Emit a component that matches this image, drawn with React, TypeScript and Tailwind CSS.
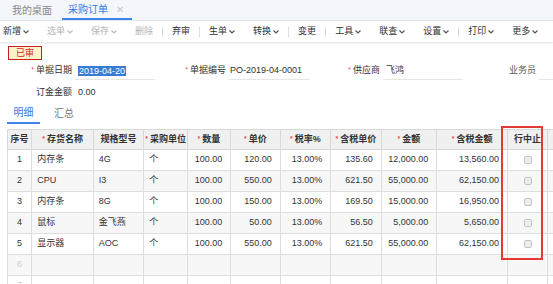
import React from 'react';

const Chevron = ({ gray }: { gray?: boolean }) => (
  <svg width="6" height="4" viewBox="0 0 6 4" className="ml-[2px]">
    <polyline points="0.5,0.5 3,3 5.5,0.5" fill="none" stroke={gray ? '#bbb' : '#555'} strokeWidth="1.2" />
  </svg>
);

type ToolItem = { label: string; menu?: boolean; disabled?: boolean } | 'sep';

const tools: ToolItem[] = [
  { label: '新增', menu: true },
  { label: '选单', menu: true, disabled: true },
  { label: '保存', menu: true, disabled: true },
  { label: '删除', disabled: true },
  'sep',
  { label: '弃审' },
  'sep',
  { label: '生单', menu: true },
  { label: '转换', menu: true },
  'sep',
  { label: '变更' },
  'sep',
  { label: '工具', menu: true },
  { label: '联查', menu: true },
  { label: '设置', menu: true },
  'sep',
  { label: '打印', menu: true },
  { label: '更多', menu: true },
];

const columns = [
  { title: '序号', w: 'w-[24px]', req: false },
  { title: '存货名称', w: 'w-[61px]', req: true },
  { title: '规格型号', w: 'w-[50px]', req: false },
  { title: '采购单位', w: 'w-[43px]', req: true },
  { title: '数量', w: 'w-[43px]', req: true },
  { title: '单价', w: 'w-[49px]', req: true },
  { title: '税率%', w: 'w-[50px]', req: true },
  { title: '含税单价', w: 'w-[50px]', req: true },
  { title: '金额', w: 'w-[55px]', req: true },
  { title: '含税金额', w: 'w-[70px]', req: true },
  { title: '行中止', w: 'w-[40px]', req: false },
  { title: '累', w: 'w-[60px]', req: false },
];

const rows = [
  ['内存条', '4G', '个', '100.00', '120.00', '13.00%', '135.60', '12,000.00', '13,560.00'],
  ['CPU', 'I3', '个', '100.00', '550.00', '13.00%', '621.50', '55,000.00', '62,150.00'],
  ['内存条', '8G', '个', '100.00', '150.00', '13.00%', '169.50', '15,000.00', '16,950.00'],
  ['鼠标', '金飞燕', '个', '100.00', '50.00', '13.00%', '56.50', '5,000.00', '5,650.00'],
  ['显示器', 'AOC', '个', '100.00', '550.00', '13.00%', '621.50', '55,000.00', '62,150.00'],
];

const Req = () => <span className="text-[#f04a4a] text-[7px] mr-[2px] relative -top-[1px]">*</span>;

const Checkbox = () => (
  <span className="inline-block w-[8px] h-[8px] rounded-[2px] border border-[#c4c4c4] bg-[#ededed] align-middle" />
);

export default function App() {
  return (
    <div
      className="relative w-[553px] h-[284px] overflow-hidden bg-white text-[#333] text-[9px]"
      style={{ fontFamily: '"Liberation Sans", "Noto Sans CJK SC", sans-serif' }}
    >
      {/* Page tabs */}
      <div className="h-[21px] bg-[#f3f6fb] flex items-stretch border-b border-[#e3e8ef]">
        <div className="pl-[12px] pr-[10px] flex items-center text-[10px] text-[#888]">我的桌面</div>
        <div className="px-[6px] flex items-center text-[10px] text-[#2f7be5] border-b-2 border-[#3b86e8] w-[70px]">
          采购订单
          <span className="ml-[8px] text-[#c5c9d0] text-[10px]">✕</span>
        </div>
      </div>

      {/* Toolbar */}
      <div className="h-[21px] flex items-center bg-white shadow-[0_1px_2px_rgba(0,0,0,0.12)] relative z-10">
        <div className="flex items-center -ml-[6px]">
          {tools.map((t, i) =>
            t === 'sep' ? (
              <span key={i} className="w-px h-[10px] bg-[#dcdcdc]" />
            ) : (
              <div
                key={i}
                className={`flex items-center px-[9px] leading-none ${t.disabled ? 'text-[#b5b5b5]' : 'text-[#333]'}`}
              >
                {t.label}
                {t.menu && <Chevron gray={t.disabled} />}
              </div>
            )
          )}
        </div>
      </div>

      {/* Status badge */}
      <div className="mt-[4px] ml-[8px] w-[34px] h-[14px] flex items-center justify-center border border-[#c8201e] bg-[#fff1c9] text-[#d3261f] leading-none">
        已审
      </div>

      {/* Form row 1 */}
      <div className="mt-[2px] h-[18px] flex items-stretch">
        <div className="w-[73px] shrink-0 flex items-center justify-end pr-[1px]">
          <Req />
          单据日期
        </div>
        <div className="ml-[2px] w-[80px] shrink-0 border-b border-[#e6e6e6] flex items-center pl-[3px]">
          <span className="bg-[#3a7bd5] text-white leading-[10px] px-[1px]">2019-04-20</span>
        </div>
        <div className="w-[72px] shrink-0 flex items-center justify-end pr-[1px]">
          <Req />
          单据编号
        </div>
        <div className="ml-[2px] w-[81px] shrink-0 border-b border-[#e6e6e6] flex items-center pl-[1px]">
          PO-2019-04-0001
        </div>
        <div className="w-[71px] shrink-0 flex items-center justify-end pr-[1px]">
          <Req />
          供应商
        </div>
        <div className="ml-[2px] w-[80px] shrink-0 border-b border-[#e6e6e6] flex items-center pl-[3px]">飞鸿</div>
        <div className="w-[74px] shrink-0 flex items-center justify-end pr-[1px] text-[#555]">业务员</div>
        <div className="ml-[2px] w-[40px] shrink-0 border-b border-[#e6e6e6]" />
      </div>

      {/* Form row 2 */}
      <div className="mt-[4px] h-[18px] flex items-center">
        <div className="w-[73px] text-right pr-[1px]">订金金额</div>
        <div className="ml-[5px]">0.00</div>
      </div>

      {/* Detail tabs */}
      <div className="mt-[1px] ml-[7px] flex items-stretch h-[21px]">
        <div className="w-[33px] flex items-center justify-center text-[10px] text-[#2f7be5] border-b-2 border-[#3b86e8]">
          明细
        </div>
        <div className="ml-[14px] flex items-center text-[10px] text-[#777]">汇总</div>
      </div>

      {/* Grid */}
      <div className="mt-[5px] ml-[7px]">
        <table className="table-fixed border-collapse w-[602px]">
          <colgroup>
            {columns.map((c, i) => (
              <col key={i} className={c.w} />
            ))}
          </colgroup>
          <thead>
            <tr className="h-[20px] bg-[#f0f0f0]">
              {columns.map((c, i) => (
                <th key={i} className="border border-[#d9d9d9] font-bold text-center whitespace-nowrap overflow-hidden p-0">
                  {c.req && <Req />}
                  {c.title}
                </th>
              ))}
            </tr>
          </thead>
          <tbody>
            {[0, 1, 2, 3, 4, 5, 6].map((r) => {
              const d = rows[r];
              return (
                <tr key={r} className={`h-[21px] ${r % 2 === 1 ? 'bg-[#f7f7f7]' : 'bg-white'}`}>
                  <td className={`border border-[#dedede] text-center ${d ? '' : 'text-[#d0d0d0]'}`}>{r + 1}</td>
                  <td className="border border-[#dedede] pl-[5px]">{d?.[0]}</td>
                  <td className="border border-[#dedede] pl-[5px]">{d?.[1]}</td>
                  <td className="border border-[#dedede] pl-[5px]">{d?.[2]}</td>
                  {[3, 4, 5, 6, 7, 8].map((k) => (
                    <td key={k} className="border border-[#dedede] text-right pr-[8px] whitespace-nowrap">
                      {d?.[k]}
                    </td>
                  ))}
                  <td className="border border-[#dedede] text-center">{d && <Checkbox />}</td>
                  <td className="border border-[#dedede]" />
                </tr>
              );
            })}
          </tbody>
        </table>
      </div>

      {/* Highlight around 行中止 column */}
      <div className="absolute left-[501px] top-[126px] w-[42px] h-[134px] border-2 border-[#e53935] pointer-events-none" />
    </div>
  );
}
